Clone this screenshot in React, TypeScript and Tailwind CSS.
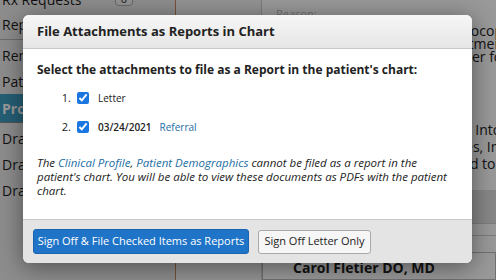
import React from 'react';

const SideItem = ({ label }: { label: string }) => (
  <div className="h-[26px] flex items-center px-[2px] text-[14px] text-[#1c1c1c]">{label}</div>
);

const App = () => {
  return (
    <div className="relative w-[496px] h-[280px] overflow-hidden bg-white" style={{ fontFamily: '"Open Sans", "Liberation Sans", sans-serif' }}>
      {/* page behind the dialog */}
      <div className="flex h-full">
        <div className="w-[176px] bg-[#ececec] border-r border-[#c8865a] flex flex-col">
          <div className="h-[14px] -mt-[8px] flex items-center justify-between px-[2px] text-[14px] text-[#1c1c1c]">
            <span>Rx Requests</span>
            <span className="mr-[40px] px-[5px] rounded-[4px] border border-[#b0b0b0] bg-[#f4f4f4] text-[11px] leading-[12px]">0</span>
          </div>
          <div className="h-[30px] flex items-center px-[2px] text-[14px] text-[#1c1c1c] border-b border-[#b5b5b5] mt-[4px]">Reports</div>
          <div className="pt-[2px]">
            <SideItem label="Reminders" />
            <SideItem label="Patient Lists" />
          </div>
          <div className="h-[29px] flex items-center px-[2px] text-[14px] bg-[#3f9ec4] text-white font-bold border-b border-[#8a8a8a]">Provider</div>
          <div className="pt-[2px]">
            <SideItem label="Drafts" />
            <SideItem label="Drafts" />
            <SideItem label="Drafts" />
          </div>
        </div>
        <div className="w-[86px] bg-[#f6f6f6] border-r border-[#cfcfcf]" />
        <div className="flex-1 flex flex-col bg-white text-[14px] text-[#222] overflow-hidden">
          <div className="pl-[14px] pt-[6px] text-[11px] text-[#bbb] h-[24px]">Reason:</div>
          <div className="flex flex-col items-end leading-[13px] whitespace-nowrap">
            <span className="mr-[-14px]">photocopy</span>
            <span className="mr-[-12px]">treatment</span>
            <span className="mr-[-12px]">letter for</span>
          </div>
          <div className="flex flex-col items-end leading-[17px] mt-[58px] whitespace-nowrap">
            <span className="mr-[-60px]">Intolerances</span>
            <span className="mr-[-10px]">Allergies, Ins</span>
            <span className="mr-[-12px]">Mailed to A</span>
          </div>
          <div className="h-[34px] bg-[#e2e2e2] mt-[18px] border-b border-[#cfcfcf]" />
          <div className="h-[12px] border-b border-[#cfcfcf]" />
          <div className="flex-1 mt-[16px] border border-[#bdbdbd] pl-[30px] pt-[4px] font-bold text-[14px] whitespace-nowrap">Carol Fletier DO, MD</div>
        </div>
      </div>

      {/* dim overlay */}
      <div className="absolute inset-0 bg-black/40" />

      {/* dialog */}
      <div className="absolute left-[23px] top-[15px] w-[449px] h-[248px] rounded-[6px] bg-white shadow-[0_4px_24px_rgba(0,0,0,0.45)] flex flex-col overflow-hidden">
        <div className="h-[34px] shrink-0 bg-gradient-to-b from-[#f6f6f6] to-[#e6e6e6] border-b border-[#c9c9c9] flex items-center px-[14px]">
          <h2 className="text-[13px] font-bold text-[#222]">File Attachments as Reports in Chart</h2>
        </div>
        <div className="flex-1 px-[14px] pt-[13px]">
          <p className="text-[12px] font-bold text-[#222] leading-[16px]">Select the attachments to file as a Report in the patient's chart:</p>
          <ol className="mt-[13px] text-[10px] text-[#222]">
            <li className="flex items-center h-[14px]">
              <span className="w-[34px] text-right text-[11px]">1.</span>
              <input type="checkbox" defaultChecked className="ml-[6px] w-[12px] h-[12px] accent-[#1a76e0]" />
              <span className="ml-[9px]">Letter</span>
            </li>
            <li className="flex items-center h-[14px] mt-[15px]">
              <span className="w-[34px] text-right text-[11px]">2.</span>
              <input type="checkbox" defaultChecked className="ml-[6px] w-[12px] h-[12px] accent-[#1a76e0]" />
              <span className="ml-[9px] font-semibold">03/24/2021</span>
              <span className="ml-[8px] text-[#1c6ea4]">Referral</span>
            </li>
          </ol>
          <p className="mt-[22px] text-[11.5px] italic leading-[14px] text-[#222]">
            The <span className="text-[#1c6ea4]">Clinical Profile</span>, <span className="text-[#1c6ea4]">Patient Demographics</span> cannot be filed as a report in the patient's chart. You will be able to view these documents as PDFs with the patient chart.
          </p>
        </div>
        <div className="h-[44px] shrink-0 bg-[#e4e4e4] border-t border-[#c9c9c9] flex items-center gap-[9px] px-[10px]">
          <button className="h-[25px] w-[216px] rounded-[3px] bg-[#1f74c8] text-white text-[11px] border border-[#1a63ad]">Sign Off &amp; File Checked Items as Reports</button>
          <button className="h-[24px] w-[113px] rounded-[3px] bg-[#f6f6f6] text-[#222] text-[11px] border border-[#a9a9a9]">Sign Off Letter Only</button>
        </div>
      </div>
    </div>
  );
};

export default App;
